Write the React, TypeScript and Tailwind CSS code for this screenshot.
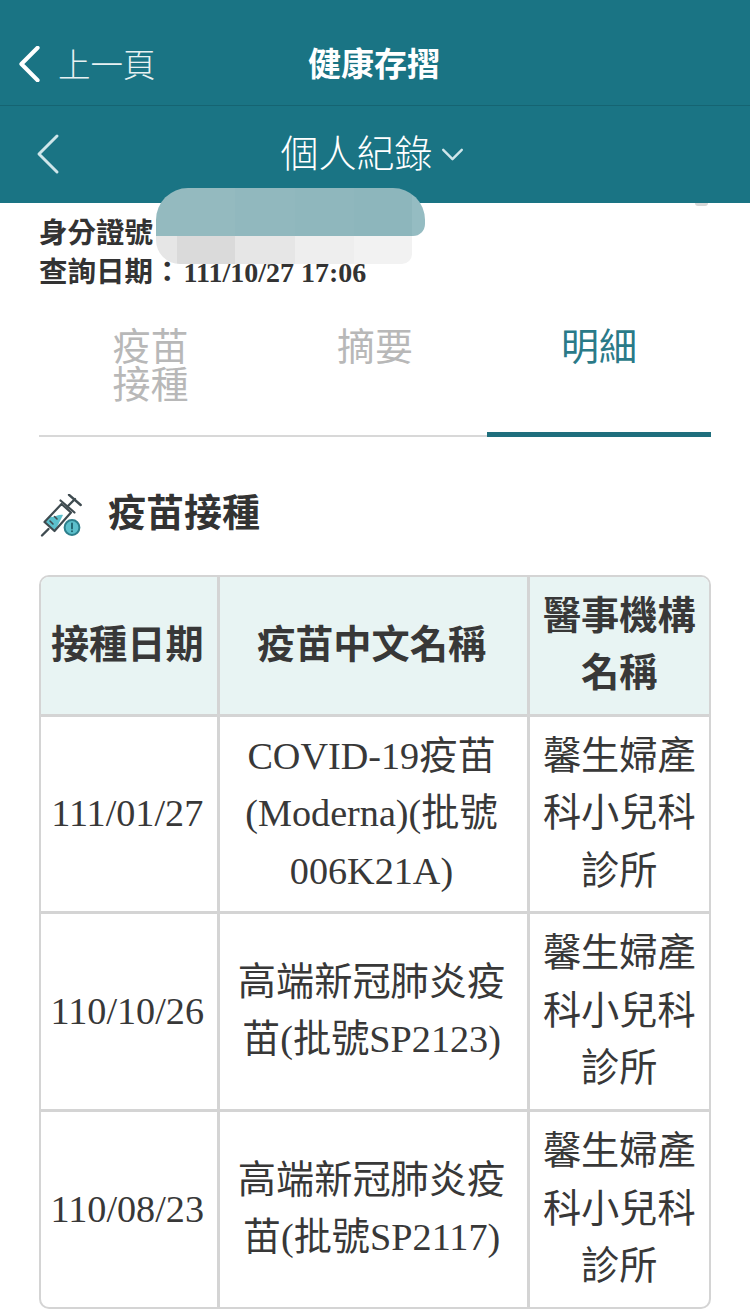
import React from "react";

const FONT = '"Liberation Serif", "Noto Sans CJK TC", serif';
const SANS = '"Noto Sans CJK TC", "Noto Sans", sans-serif';

function Chevron({ className, sw }: { className: string; sw: number }) {
  return (
    <svg viewBox="0 0 24 40" className={className} fill="none" stroke="currentColor" strokeWidth={sw} strokeLinecap="round" strokeLinejoin="round">
      <path d="M21 2 L3 20 L21 38" />
    </svg>
  );
}

function Syringe() {
  return (
    <svg viewBox="0 0 44 44" className="w-[44px] h-[44px] shrink-0">
      <path d="M5 28 L11 22 C15 25 18 20 24 21 L16 37 Z" fill="#5cc0cc" />
      <g fill="none" stroke="#3f4b50" strokeWidth="2.2" strokeLinecap="round" strokeLinejoin="round">
        <path d="M5.5 28 L22.5 10 L32 18.5 L15.5 37 Z" />
        <path d="M9.5 35 L3 41.5" strokeWidth="2.4" />
        <path d="M21.5 6.5 L35.5 18.5" />
        <path d="M28.5 12.5 L36 5" strokeWidth="2.4" />
        <path d="M30 0.8 L41.7 11" strokeWidth="2.4" />
        <path d="M11 27 L14 30 M15.5 22.5 L18 25" strokeWidth="1.6" />
      </g>
      <circle cx="33" cy="33.5" r="7.4" fill="#5cc0cc" stroke="#2d7f8c" strokeWidth="2" />
      <path d="M33 29.5 V34.5" stroke="#1f5f6b" strokeWidth="1.8" strokeLinecap="round" />
      <circle cx="33" cy="37.2" r="1" fill="#1f5f6b" />
    </svg>
  );
}

const rows = [
  { date: "111/01/27", name: "COVID-19疫苗(Moderna)(批號006K21A)" },
  { date: "110/10/26", name: "高端新冠肺炎疫苗(批號SP2123)" },
  { date: "110/08/23", name: "高端新冠肺炎疫苗(批號SP2117)" },
];

export default function App() {
  return (
    <div className="relative w-[750px] h-[1315px] overflow-hidden bg-white" style={{ fontFamily: FONT }}>
      <header className="bg-[#1a7484] text-white" style={{ fontFamily: SANS }}>
        <div className="h-[106px] relative flex items-center justify-center border-b border-[#156472] pt-[18px]">
          <div className="absolute left-[18px] top-[46px] flex items-center gap-[17px]">
            <Chevron className="w-[23px] h-[36px]" sw={4.5} />
            <span className="text-[32.5px] leading-[36px] font-light text-[#e8f1f2] -mt-[3px]">上一頁</span>
          </div>
          <span className="text-[33px] leading-[40px] font-bold -ml-[2px]">健康存摺</span>
        </div>
        <div className="h-[97px] relative flex items-center justify-center pb-[8px] pr-[6px]">
          <Chevron className="absolute left-[36px] top-[26px] w-[24px] h-[44px] text-[#cfe6ea]" sw={3} />
          <span className="text-[38px] leading-[46px] font-light">個人紀錄</span>
          <svg viewBox="0 0 24 14" className="w-[23px] h-[13px] ml-[8px] mt-[8px] text-[#cfe6ea]" fill="none" stroke="currentColor" strokeWidth="2.6" strokeLinecap="round" strokeLinejoin="round">
            <path d="M2 2 L12 12 L22 2" />
          </svg>
        </div>
      </header>

      <main className="px-[39px]">
        <div className="pt-[11px] text-[28.5px] leading-[39px] font-bold text-[#333333]">
          <div>身分證號</div>
          <div>查詢日期：<span className="ml-[2px] text-[28px]">111/10/27 17:06</span></div>
        </div>

        <div className="flex mt-[33px] h-[112px] border-b-2 border-[#d8d8d8] text-[38px] leading-[38px]" style={{ fontFamily: SANS }}>
          <div className="flex-1 flex justify-center text-[#b8b8b8]">
            <span className="w-[76px] -ml-[1px]">疫苗接種</span>
          </div>
          <div className="flex-1 text-center text-[#b8b8b8]">摘要</div>
          <div className="flex-1 text-center text-[#2a7a88] relative">
            明細
            <div className="absolute left-0 right-0 -bottom-[2px] h-[5px] bg-[#1f6f7d]" />
          </div>
        </div>

        <div className="flex items-center mt-[57px] h-[44px]">
          <Syringe />
          <h2 className="ml-[25px] mb-[12px] text-[38px] leading-[44px] font-bold text-[#333333]" style={{ fontFamily: SANS }}>疫苗接種</h2>
        </div>

        <div className="mt-[37px] rounded-[10px] border-2 border-[#d4d4d4] overflow-hidden w-[672px]">
          <table className="w-full table-fixed border-collapse text-[38.2px] leading-[57.5px] text-[#383838] text-center">
            <colgroup>
              <col className="w-[177px]" />
              <col className="w-[310px]" />
              <col />
            </colgroup>
            <thead>
              <tr className="h-[138px] bg-[#e8f4f3] font-bold">
                <th className="border-r-[3px] border-b-[3px] border-[#d4d4d4] pr-[3px]">接種日期</th>
                <th className="border-r-[3px] border-b-[3px] border-[#d4d4d4] pr-[3px]">疫苗中文名稱</th>
                <th className="border-b-[3px] border-[#d4d4d4] px-[6px]">醫事機構名稱</th>
              </tr>
            </thead>
            <tbody>
              {rows.map((r, i) => (
                <tr key={r.date} className={i < 2 ? "h-[197.5px]" : "h-[197px]"}>
                  <td className={`border-r-[3px] border-[#d4d4d4] pr-[3px] ${i < 2 ? "border-b-[3px]" : ""}`}>{r.date}</td>
                  <td className={`border-r-[3px] border-[#d4d4d4] pl-[6px] pr-[9px] ${i < 2 ? "border-b-[3px]" : ""}`}>{r.name}</td>
                  <td className={`border-[#d4d4d4] px-[6px] ${i < 2 ? "border-b-[3px]" : ""}`}>馨生婦產科小兒科診所</td>
                </tr>
              ))}
            </tbody>
          </table>
        </div>
      </main>

      {/* small mark peeking out under the header */}
      <div className="absolute left-[695px] top-[203px] w-[13px] h-[3px] rounded-b-full bg-[#d8d8d8]" />

      {/* censored ID: a mosaic smear lying over the header and the ID line */}
      <div className="absolute left-[156px] top-[188px] w-[269px] h-[48px] rounded-t-[32px] rounded-br-[12px] overflow-hidden flex">
        <div className="w-[79px] bg-[#94babf]" />
        <div className="w-[60px] bg-[#91b8be]" />
        <div className="w-[59px] bg-[#8fb7bd]" />
        <div className="w-[58px] bg-[#8db6bc]" />
        <div className="flex-1 bg-[#95bcc2]" />
      </div>
      <div className="absolute left-[156px] top-[236px] w-[256px] h-[28px] rounded-bl-[24px] rounded-br-[10px] overflow-hidden flex">
        <div className="w-[21px] bg-[#e6e6e6]" />
        <div className="w-[58px] bg-[#dadada]" />
        <div className="w-[60px] bg-[#e6e6e6]" />
        <div className="w-[59px] bg-[#eeeeee]" />
        <div className="w-[58px] bg-[#f2f2f2]" />
      </div>
    </div>
  );
}
